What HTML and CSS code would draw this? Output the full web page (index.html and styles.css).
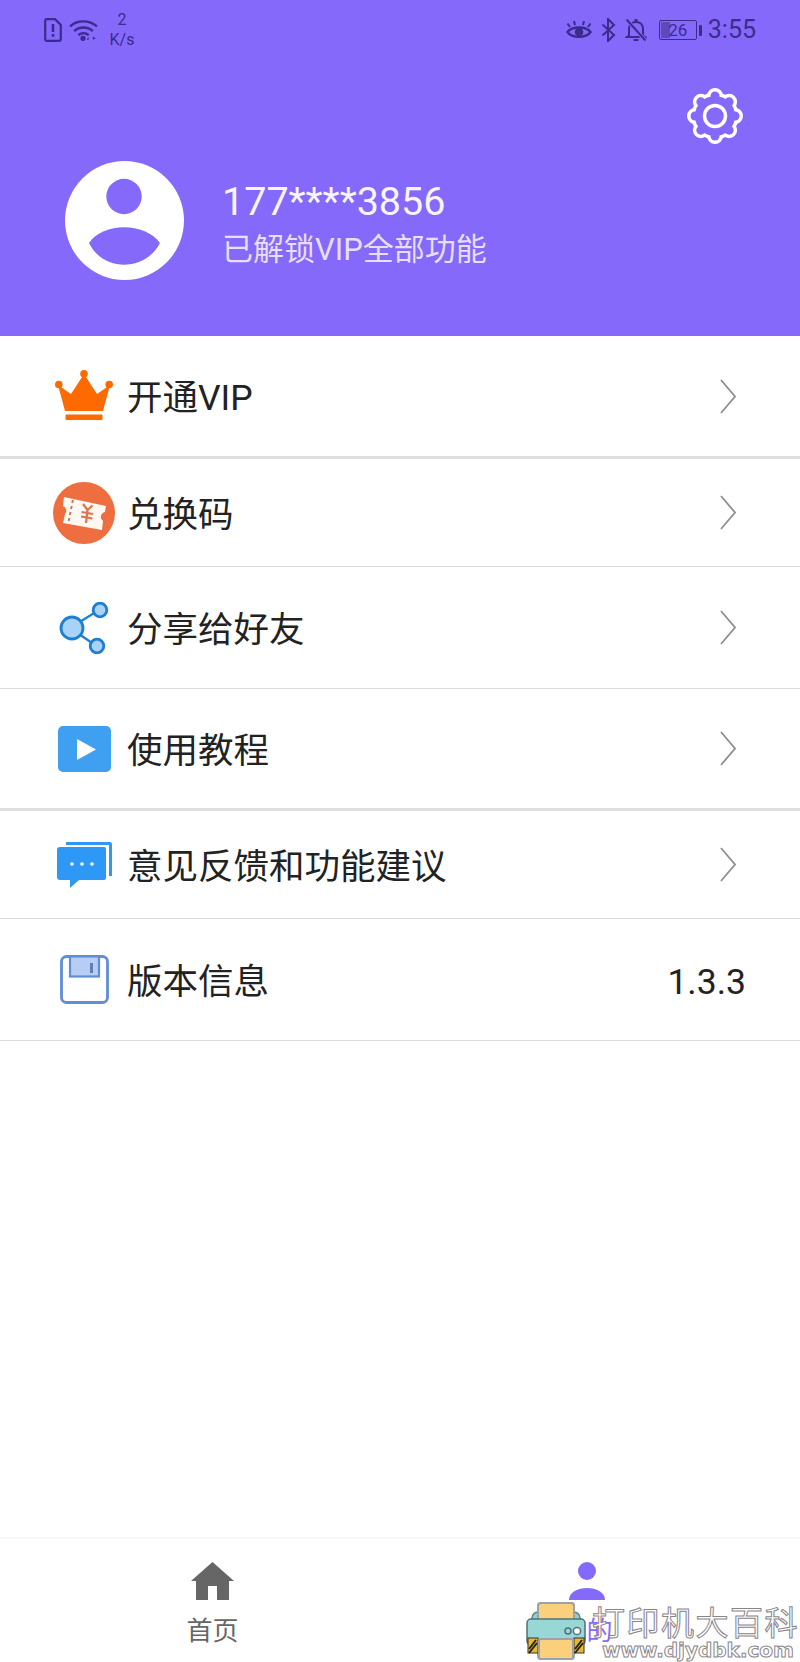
FILE: index.html
```html
<!DOCTYPE html>
<html lang="zh">
<head>
<meta charset="utf-8">
<title>我的</title>
<link rel="stylesheet" href="styles.css">
</head>
<body>
<div class="page">
  <header class="header">
    <div class="status">
      <div class="status-left">
        <svg class="ic-sim" viewBox="0 0 18 24"><path d="M2.5 1.2h8.5l5.8 5.8v14a1.8 1.8 0 0 1-1.8 1.8H2.5A1.5 1.5 0 0 1 1.2 21V2.7A1.5 1.5 0 0 1 2.5 1.2z" fill="none" stroke="#3b2b8c" stroke-width="2.2"/><rect x="7.7" y="6" width="2.6" height="8" fill="#3b2b8c"/><rect x="7.7" y="16" width="2.6" height="2.8" fill="#3b2b8c"/></svg>
        <svg class="ic-wifi" viewBox="0 0 28 23"><g fill="none" stroke="#3b2b8c" stroke-width="2.3"><path d="M1 8C8 1.5 19.500 1.500 27 8"/><path d="M5 12.500c5-4.500 13-4.500 18 0"/><path d="M9 16.500c3-2.500 7-2.500 10 0"/></g><circle cx="13.500" cy="19.500" r="2.500" fill="#3b2b8c"/><path d="M19 21v-3l-2 3zM23 18v3l3-1.500z" fill="#3b2b8c"/></svg>
        <div class="speed"><span>2</span><span>K/s</span></div>
      </div>
      <div class="status-right">
        <svg class="ic-eye" viewBox="0 0 26 20"><path d="M1.500 12C6 6 20 6 24.500 12 20 18.500 6 18.500 1.500 12z" fill="none" stroke="#3b2b8c" stroke-width="2.400"/><circle cx="13" cy="12" r="4.300" fill="#3b2b8c"/><path d="M4 7L1.500 3.500M9 5L8 1M17 5l1-4M22 7l2.500-3.500" stroke="#3b2b8c" stroke-width="2"/></svg>
        <svg class="ic-bt" viewBox="0 0 15 24"><path d="M1.500 6.500L13 17l-6 6V1l6 6L1.500 17.500" fill="none" stroke="#3b2b8c" stroke-width="2"/></svg>
        <svg class="ic-bell" viewBox="0 0 22 24"><path d="M4 17.500V11c0-4 2.500-7 7-7s7 3 7 7v6.500l2 1.500H2zM8.500 22h5" fill="none" stroke="#3b2b8c" stroke-width="2"/><path d="M2 2l18 20" stroke="#8569fb" stroke-width="4"/><path d="M1.500 1.500l19 21" stroke="#3b2b8c" stroke-width="2"/><rect x="9.500" y="1" width="3" height="3" fill="#3b2b8c"/></svg>
        <div class="battery"><span class="battery-fill"></span><span class="battery-text">26</span></div>
        <span class="battery-nub"></span>
        <span class="time">3:55</span>
      </div>
    </div>
    <div class="gear-row">
      <svg class="ic-gear" viewBox="0 0 56 56">
        <defs>
          <g id="cog">
            <circle cx="28" cy="28" r="20"/>
            <circle cx="28" cy="8" r="4.500"/><circle cx="28" cy="48" r="4.500"/>
            <circle cx="8" cy="28" r="4.500"/><circle cx="48" cy="28" r="4.500"/>
            <circle cx="13.860" cy="13.860" r="4.500"/><circle cx="42.140" cy="13.860" r="4.500"/>
            <circle cx="13.860" cy="42.140" r="4.500"/><circle cx="42.140" cy="42.140" r="4.500"/>
          </g>
        </defs>
        <use href="#cog" fill="#fff" stroke="#fff" stroke-width="7"/>
        <use href="#cog" fill="#8569fb"/>
        <circle cx="28" cy="28" r="10.500" fill="none" stroke="#fff" stroke-width="3.500"/>
      </svg>
    </div>
    <div class="profile">
      <svg class="avatar" viewBox="0 0 119 119"><circle cx="59.500" cy="59.500" r="59.500" fill="#fff"/><circle cx="59" cy="35.500" r="17.700" fill="#8569fb"/><path d="M24 82C38 61 80 61 95 82 80 111 38 111 24 82z" fill="#8569fb"/></svg>
      <div class="profile-text">
        <div class="name">177****3856</div>
        <div class="sub">已解锁VIP全部功能</div>
      </div>
    </div>
  </header>

  <main class="menu">
    <div class="row row-a thick">
      <div class="icon icon-up"><svg class="ic-crown" viewBox="0 0 58 50"><g fill="#ff6a00"><circle cx="3.800" cy="14.500" r="3.800"/><circle cx="29" cy="3.800" r="3.800"/><circle cx="54.200" cy="14.500" r="3.800"/><path d="M3 15l13 9L29 4l13 20 13-9-7 26H10z"/><rect x="10.500" y="44.500" width="37" height="5.500" rx="1"/></g></svg></div>
      <span class="label">开通VIP</span>
      <svg class="chev" viewBox="0 0 16 35"><path d="M1 1l14 16.500L1 34" fill="none" stroke="#8e8e8e" stroke-width="1.800"/></svg>
    </div>
    <div class="row row-b">
      <div class="icon"><svg class="ic-coupon" viewBox="0 0 62 62"><circle cx="31" cy="31" r="31" fill="#ee6e40"/><path d="M11 15l42 9-1 6a5 5 0 0 0-2 9l-1 9-39-7 2-9a5 5 0 0 0-2-8z" fill="#fff7f1"/><path d="M30 22l4.500 6 5-4.500M28.500 30l11.500 2M28 34.500l11.500 2M34.500 28l-1.500 13" fill="none" stroke="#e0734a" stroke-width="2.200"/><path d="M20 18l-.8 3M18.800 24l-.8 3M17.600 30l-.8 3M16.400 36l-.8 3" stroke="#c67a5c" stroke-width="2"/></svg></div>
      <span class="label">兑换码</span>
      <svg class="chev" viewBox="0 0 16 35"><path d="M1 1l14 16.500L1 34" fill="none" stroke="#8e8e8e" stroke-width="1.800"/></svg>
    </div>
    <div class="row row-a">
      <div class="icon"><svg class="ic-share" viewBox="0 0 50 52"><path d="M11 26L40 8M11 26l28 19" stroke="#1d7fd1" stroke-width="2.200"/><circle cx="13" cy="26" r="11" fill="#a9d2f7" stroke="#1d7fd1" stroke-width="2.800"/><circle cx="41" cy="8" r="6.800" fill="#a9d2f7" stroke="#1d7fd1" stroke-width="2.800"/><circle cx="38" cy="44" r="6.800" fill="#a9d2f7" stroke="#1d7fd1" stroke-width="2.800"/></svg></div>
      <span class="label">分享给好友</span>
      <svg class="chev" viewBox="0 0 16 35"><path d="M1 1l14 16.500L1 34" fill="none" stroke="#8e8e8e" stroke-width="1.800"/></svg>
    </div>
    <div class="row row-a thick">
      <div class="icon"><svg class="ic-play" viewBox="0 0 53 46"><rect width="53" height="46" rx="5" fill="#3f9ff1"/><path d="M19 13l19 10.500L19 34z" fill="#fff"/></svg></div>
      <span class="label">使用教程</span>
      <svg class="chev" viewBox="0 0 16 35"><path d="M1 1l14 16.500L1 34" fill="none" stroke="#8e8e8e" stroke-width="1.800"/></svg>
    </div>
    <div class="row row-b">
      <div class="icon"><svg class="ic-chat" viewBox="0 0 55 46"><path d="M9 0h44a2 2 0 0 1 2 2v32h-3V3H9z" fill="#2d98f5"/><path d="M3 5h44a2 2 0 0 1 2 2v29a2 2 0 0 1-2 2H22l-9 8v-8H3a3 3 0 0 1-3-3V8a3 3 0 0 1 3-3z" fill="#2d98f5"/><g fill="#fff"><circle cx="15" cy="22" r="1.800"/><circle cx="25" cy="22" r="1.800"/><circle cx="35" cy="22" r="1.800"/></g></svg></div>
      <span class="label">意见反馈和功能建议</span>
      <svg class="chev" viewBox="0 0 16 35"><path d="M1 1l14 16.500L1 34" fill="none" stroke="#8e8e8e" stroke-width="1.800"/></svg>
    </div>
    <div class="row row-a">
      <div class="icon"><svg class="ic-save" viewBox="0 0 49 49"><rect x="1.500" y="1.500" width="46" height="46" rx="5" fill="#fff" stroke="#5f8ed8" stroke-width="2.800"/><rect x="10" y="1.500" width="29" height="20" fill="#b7cdf3" stroke="#5f8ed8" stroke-width="2.200"/><rect x="30" y="8" width="3" height="10" fill="#5f7fb8"/></svg></div>
      <span class="label">版本信息</span>
      <span class="version">1.3.3</span>
    </div>
  </main>

  <nav class="tabbar">
    <div class="tab">
      <svg class="ic-home" viewBox="0 0 43 38"><path d="M21.500 0L43 19h-5v19H26V24h-9v14H5V19H0z" fill="#666"/></svg>
      <span class="tab-label">首页</span>
    </div>
    <div class="tab tab-on">
      <svg class="ic-person" viewBox="0 0 36 38"><circle cx="18" cy="9" r="9" fill="#8569fb"/><path d="M0 38c0-16 36-16 36 0z" fill="#8569fb"/></svg>
      <span class="tab-label">我的</span>
    </div>
  </nav>
</div>

<div class="watermark">
  <svg class="printer" viewBox="0 0 60 58">
    <rect x="12" y="1" width="36" height="56" rx="3" fill="#fbd07c" stroke="#9aa3a8" stroke-width="2"/>
    <rect x="6" y="10" width="48" height="14" rx="6" fill="#8fcfd0" stroke="#5c7f88" stroke-width="1.500"/>
    <rect x="12" y="1" width="36" height="20" rx="3" fill="#fbd07c" stroke="#9aa3a8" stroke-width="2"/>
    <rect x="1" y="17" width="58" height="26" rx="4" fill="#97d7d6" stroke="#51707a" stroke-width="1.500"/>
    <rect x="2" y="36" width="10" height="15" fill="#e9b92c" stroke="#333" stroke-width="1"/>
    <rect x="48" y="36" width="10" height="15" fill="#e9b92c" stroke="#333" stroke-width="1"/>
    <path d="M3 47l7-9M3 51l8-10M49 47l7-9M49 51l8-10" stroke="#222" stroke-width="2"/>
    <rect x="13" y="37" width="34" height="20" rx="2" fill="#fbd07c" stroke="#9aa3a8" stroke-width="2"/>
    <circle cx="42" cy="29" r="3" fill="none" stroke="#51707a" stroke-width="1.500"/>
    <circle cx="51" cy="29" r="3.600" fill="#fff" stroke="#51707a" stroke-width="1.500"/>
  </svg>
  <div class="wm-text">
    <div class="wm-cn">打印机大百科</div>
    <div class="wm-en">www.djydbk.com</div>
  </div>
</div>
</body>
</html>
```
FILE: styles.css
```css
* { box-sizing: border-box; }
html, body { margin: 0; padding: 0; }
body {
  width: 800px;
  height: 1662px;
  position: relative;
  overflow: hidden;
  background: #fff;
  font-family: Roboto, "Noto Sans CJK SC", sans-serif;
}
svg { display: block; flex: none; }
.page { display: flex; flex-direction: column; height: 1662px; }

.header { height: 336px; background: #8569fb; display: flex; flex-direction: column; flex: none; }
.status {
  height: 60px;
  display: flex;
  justify-content: space-between;
  align-items: center;
  padding: 0 44px;
  color: #3b2b8c;
}
.status-left, .status-right { display: flex; align-items: center; }
.ic-sim { width: 18px; height: 24px; }
.ic-wifi { width: 29px; height: 24px; margin-left: 7px; }
.speed {
  display: flex;
  flex-direction: column;
  align-items: center;
  margin-left: 10px;
  font-size: 16px;
  line-height: 20px;
  width: 28px;
}
.ic-eye { width: 26px; height: 20px; }
.ic-bt { width: 15px; height: 24px; margin-left: 9px; }
.ic-bell { width: 22px; height: 24px; margin-left: 9px; }
.battery {
  position: relative;
  width: 38px;
  height: 20px;
  margin-left: 12px;
  border: 1.500px solid #3b2b8c;
  border-radius: 2px;
  display: flex;
  align-items: center;
  justify-content: center;
}
.battery-fill { position: absolute; left: 1px; top: 1px; bottom: 1px; width: 9px; background: #5d4ab8; }
.battery-text { position: relative; font-size: 17px; line-height: 18px; }
.battery-nub { width: 3px; height: 11px; margin-left: 2px; background: #3b2b8c; border-radius: 1px; }
.time { margin-left: 6px; font-size: 25px; line-height: 30px; }

.gear-row { display: flex; justify-content: flex-end; padding: 28px 57px 0 0; }
.ic-gear { width: 56px; height: 56px; }
.profile { display: flex; align-items: center; padding: 17px 0 0 65px; }
.avatar { width: 119px; height: 119px; }
.profile-text { margin-left: 38px; margin-top: 9px; }
.name { font-size: 39.500px; line-height: 46px; color: #f7f5ff; }
.sub { font-size: 31px; line-height: 42px; margin-top: 4px; color: #e6dfff; }

.menu { flex: none; }
.row {
  display: flex;
  align-items: center;
  padding: 0 54px 0 52px;
  border-bottom: 1px solid #dcdcdc;
  background: #fff;
}
.row-a { height: 122px; }
.row-b { height: 108px; }
.row:first-child { height: 123px; }
.row.thick { border-bottom: 3px solid #dedede; }
.icon { width: 64px; display: flex; justify-content: center; align-items: center; flex: none; }
.icon-up { padding-bottom: 2px; }
.label { margin-left: 11px; padding-top: 4px; font-size: 35.500px; line-height: 44px; color: #222; flex: 1; }
.version { font-size: 35.500px; line-height: 44px; padding-top: 4px; color: #222; }
.chev { width: 16px; height: 35px; margin-right: 10px; }

.ic-crown { width: 58px; height: 50px; }
.ic-coupon { width: 62px; height: 62px; }
.ic-share { width: 50px; height: 52px; }
.ic-play { width: 53px; height: 46px; }
.ic-chat { width: 55px; height: 46px; }
.ic-save { width: 49px; height: 49px; }

.tabbar {
  margin-top: auto;
  height: 125px;
  display: flex;
  border-top: 2px solid #f8f8f8;
  background: #fff;
}
.tab { display: flex; flex-direction: column; align-items: center; padding-top: 23px; color: #666; flex: none; width: 425px; }
.tab-on { color: #8569fb; width: 323px; }
.ic-home { width: 43px; height: 38px; }
.ic-person { width: 36px; height: 38px; }
.tab-label { font-size: 26px; line-height: 34px; margin-top: 14px; }

.watermark {
  position: absolute;
  left: 526px;
  top: 1602px;
  display: flex;
  align-items: flex-start;
}
.printer { width: 60px; height: 58px; }
.wm-text { margin-left: 6px; margin-top: 1px; }
.wm-cn {
  font-family: "Noto Sans CJK SC", sans-serif;
  font-size: 33px;
  line-height: 36px;
  letter-spacing: 1.500px;
  color: #fff;
  -webkit-text-stroke: 1px #8a8489;
  white-space: nowrap;
}
.wm-en {
  font-family: "DejaVu Sans", sans-serif;
  font-weight: bold;
  font-size: 20px;
  line-height: 22px;
  margin-left: 10px;
  color: #fff;
  -webkit-text-stroke: 1px #8a8489;
  white-space: nowrap;
}
```
